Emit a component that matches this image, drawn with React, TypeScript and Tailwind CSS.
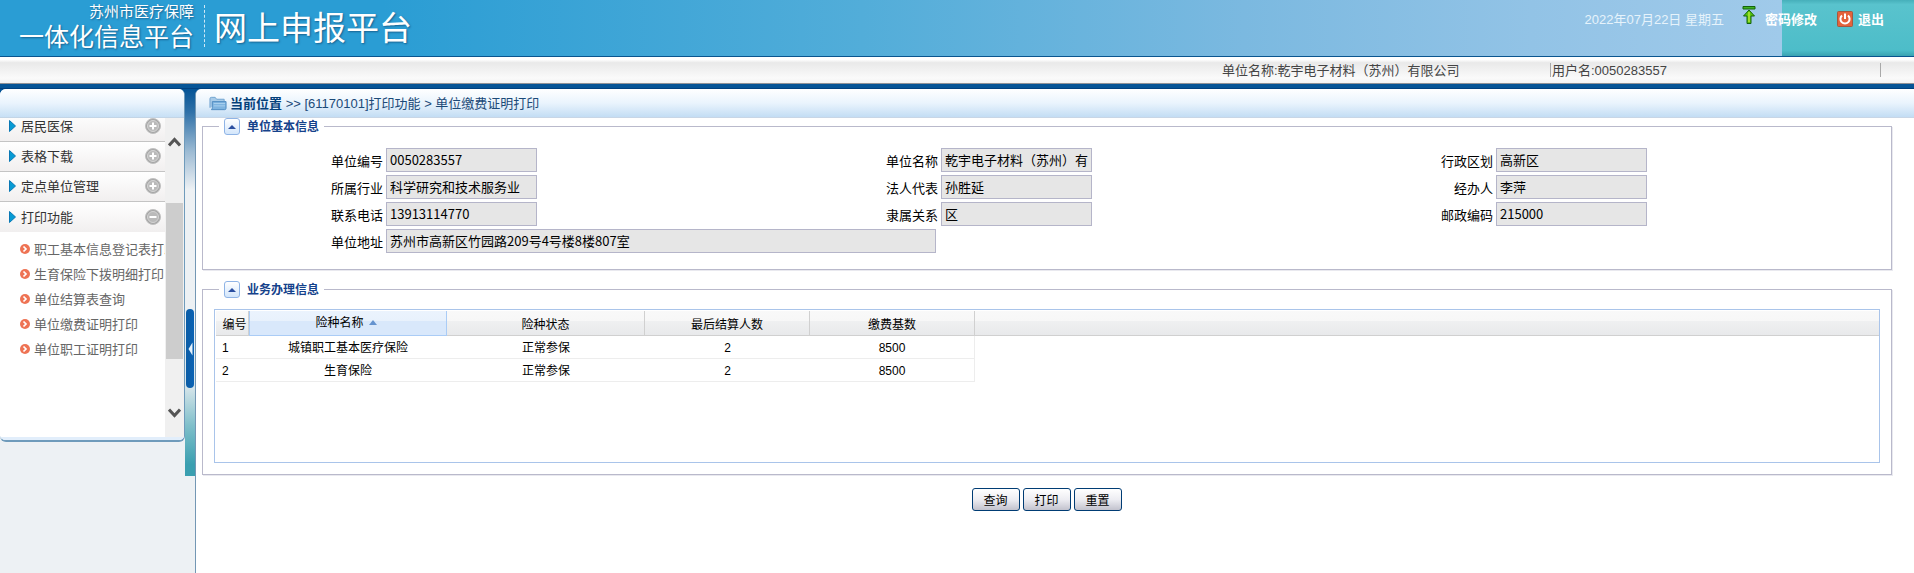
import React, { useId, useState } from "react";

const menu = ["居民医保", "表格下载", "定点单位管理", "打印功能"];
const subMenu = [
  "职工基本信息登记表打印",
  "生育保险下拨明细打印",
  "单位结算表查询",
  "单位缴费证明打印",
  "单位职工证明打印",
];

const fields = [
  ["单位编号", "0050283557"],
  ["单位名称", "乾宇电子材料（苏州）有限公司"],
  ["行政区划", "高新区"],
  ["所属行业", "科学研究和技术服务业"],
  ["法人代表", "孙胜延"],
  ["经办人", "李萍"],
  ["联系电话", "13913114770"],
  ["隶属关系", "区"],
  ["邮政编码", "215000"],
];

const rows = [
  ["1", "城镇职工基本医疗保险", "正常参保", "2", "8500"],
  ["2", "生育保险", "正常参保", "2", "8500"],
];

function UpIcon() {
  return (
    <svg width="14" height="20" viewBox="0 0 14 20" aria-hidden="true">
      <path d="M1 1.500h12v2.500H1z" fill="#3fb523" stroke="#14620d" />
      <path d="M7 5l5.500 6H9V18.500H5V11H1.500z" fill="#58c40c" stroke="#14620d" />
      <path d="M7 7v10" stroke="#b4e636" strokeWidth="1.500" />
    </svg>
  );
}

function PowerIcon() {
  return (
    <svg width="16" height="16" viewBox="0 0 16 16" aria-hidden="true">
      <rect x="0.5" y="0.5" width="15" height="15" rx="1" fill="#e4633c" stroke="#a5583f" />
      <path d="M5 4.500a4.600 4.600 0 1 0 6 0" fill="none" stroke="#fff" strokeWidth="2" />
      <path d="M8 2.500v5.500" stroke="#fff" strokeWidth="2" />
    </svg>
  );
}

function FolderIcon() {
  return (
    <svg width="18" height="15" viewBox="0 0 19 15" aria-hidden="true">
      <path d="M1 12V2.500Q1 1 2.500 1H6.500L8 3H16V5" fill="#a8cbe8" stroke="#6fa3cf" />
      <path d="M3.500 5.500H18V12.500Q18 14 16.500 14H2.500Q3.500 13.500 3.500 12Z" fill="#7fb4e0" stroke="#4f8cc2" />
      <path d="M5 7.500H17M5 10H17" stroke="#a9d0ee" />
    </svg>
  );
}

function ToggleIcon({ open }: { open: boolean }) {
  return (
    <svg width="16" height="16" viewBox="0 0 16 16" aria-hidden="true">
      <circle cx="8" cy="8" r="7.500" fill="#a6a6a6" stroke="#c0c0c0" />
      <circle cx="8" cy="8" r="5.500" fill="#bababa" stroke="#d4d4d4" />
      <path d={open ? "M4.500 8h7" : "M4.500 8h7M8 4.500v7"} stroke="#fff" strokeWidth="2" />
    </svg>
  );
}

function Bullet() {
  return (
    <svg className="shrink-0" width="10" height="10" viewBox="0 0 10 10" aria-hidden="true">
      <circle cx="5" cy="5" r="5" fill="#ee7354" />
      <path d="M3.500 2.500L6 5L3.500 7.500" fill="none" stroke="#fff" strokeWidth="1.700" />
    </svg>
  );
}

function Panel({ title, children }: { title: string; children: React.ReactNode }) {
  const [open, setOpen] = useState(true);
  return (
    <fieldset className="min-w-0 border border-[#b9b9cb] px-[11px] shadow-[1px_1px_0_#e9e9ef]">
      <legend className="ml-[5px] flex h-[17px] items-center gap-[7px] px-[5px] text-xs font-bold text-[#15428b]">
        <button
          type="button"
          aria-label={title}
          onClick={() => setOpen(!open)}
          className="flex h-[17px] w-4 items-center justify-center rounded-[3px] border border-[#8fb4e6] bg-linear-to-b from-white to-[#d3e6fb]"
        >
          <svg width="8" height="4" viewBox="0 0 8 4" aria-hidden="true">
            <path d="M4 0L8 4H0z" fill="#2b4fa0" />
          </svg>
        </button>
        {title}
      </legend>
      {open && children}
    </fieldset>
  );
}

function Field({ label, value, wide = false }: { label: string; value: string; wide?: boolean }) {
  const id = useId();
  return (
    <div className={wide ? "col-span-3 flex items-center gap-[3px]" : "flex items-center gap-[3px]"}>
      <label htmlFor={id} className="w-[168px] shrink-0 pt-[2px] text-right">
        {label}
      </label>
      <input
        id={id}
        readOnly
        defaultValue={value}
        className={
          wide
            ? "h-6 w-[550px] border border-[#b5b5c9] bg-[#e6e6e6] px-[3px] pb-px"
            : "h-6 w-[151px] border border-[#b5b5c9] bg-[#e6e6e6] px-[3px] pb-px"
        }
      />
    </div>
  );
}

export default function App() {
  return (
    <div className="flex min-h-screen flex-col bg-[#edf1f4] font-['Liberation_Sans','Noto_Sans_CJK_SC',sans-serif] text-[13px] text-black">
      <header className="flex h-[57px] items-start justify-between border-b border-[#0a558f] bg-[linear-gradient(to_right,#2a9dd4_0%,#2a9dd4_20%,#52add9_45%,#7bb9e0_65%,#92c3e6_80%,#a0caea_93.1%,transparent_93.1%),linear-gradient(to_bottom,#46afba_0%,#59c3cd_8%,#4dbdc9_90%,#3aa3b2_100%)]">
        <h1 className="flex items-start font-['Noto_Sans_CJK_SC',sans-serif] font-normal text-white [text-shadow:1px_1px_2px_#17618f]">
          <span className="flex w-[194px] flex-col items-end pt-px">
            <span className="text-[15px] leading-5">苏州市医疗保障</span>
            <span className="text-[25px] leading-7">一体化信息平台</span>
          </span>
          <span className="ml-[10px] mt-[5px] h-[42px] border-l border-dashed border-[#cfe8f6]" />
          <span className="ml-[9px] text-[33px] leading-[52px]">网上申报平台</span>
        </h1>
        <nav className="flex items-start pr-[30px] text-white">
          <span className="mr-[18px] pt-[10px] leading-5 text-[#e6f3fb]">2022年07月22日 星期五</span>
          <a href="#password" className="mr-5 flex items-start gap-[9px] font-bold">
            <span className="pt-[5px]">
              <UpIcon />
            </span>
            <span className="pt-[10px] leading-5">密码修改</span>
          </a>
          <a href="#logout" className="flex items-start gap-[5px] font-bold">
            <span className="pt-[11px]">
              <PowerIcon />
            </span>
            <span className="pt-[10px] leading-5">退出</span>
          </a>
        </nav>
      </header>

      <div className="flex h-[27px] items-center justify-end border-b border-[#8f9196] bg-[linear-gradient(to_bottom,#ffffff_0%,#ffffff_10%,#e9e9e9_22%,#fafafa_80%,#f4f4f4_100%)] pr-[33px] text-[#444444]">
        <span className="w-[328px] pt-px">单位名称:乾宇电子材料（苏州）有限公司</span>
        <span className="h-[14px] w-[331px] border-x border-[#a9a9a9] pl-px leading-4">用户名:0050283557</span>
      </div>
      <div className="h-[5px] border-b border-[#00407f] bg-[#055496]" />

      <div className="flex flex-1 items-stretch">
        <aside className="w-[185px] shrink-0 bg-[linear-gradient(#055496,#055496)] bg-[length:100%_8px] bg-no-repeat">
          <div className="overflow-hidden rounded-md border-r border-b-2 border-[#6f9bbb] bg-white font-['Noto_Sans_CJK_SC',sans-serif]">
            <div className="h-[29px] border-b border-[#c3d5e6] bg-linear-to-b from-white via-[#eaf4fd] to-[#c7e0f5]" />
            <div className="flex h-[319px]">
              <nav className="min-w-0 flex-1 overflow-hidden">
                <ul className="-mt-[6px]">
                  {menu.map((item, i) => (
                    <li key={item}>
                      <button
                        type="button"
                        className={
                          i === menu.length - 1
                            ? "flex h-[30px] w-full items-center bg-linear-to-b from-white to-[#f1efef] pl-[9px] pr-1 pb-px text-left text-[#333]"
                            : "flex h-[30px] w-full items-center border-b border-[#c4c4c4] bg-linear-to-b from-white to-[#f1efef] pl-[9px] pr-1 pb-px text-left text-[#333]"
                        }
                      >
                        <svg width="7" height="12" viewBox="0 0 7 12" aria-hidden="true">
                          <path d="M0.500 0.500L6.500 6L0.500 11.500z" fill="#079bd4" stroke="#0a78b4" />
                        </svg>
                        <span className="ml-[5px] flex-1">{item}</span>
                        <ToggleIcon open={i === menu.length - 1} />
                      </button>
                    </li>
                  ))}
                </ul>
                <ul className="pt-1 text-[#666]">
                  {subMenu.map((item) => (
                    <li key={item}>
                      <a href="#print" className="flex h-[25px] items-center gap-1 pl-5 whitespace-nowrap">
                        <Bullet />
                        {item}
                      </a>
                    </li>
                  ))}
                </ul>
              </nav>
              <div className="flex w-[19px] shrink-0 flex-col items-center bg-[#f0f0f0] pt-[19px] pb-[19px]">
                <svg width="13" height="10" viewBox="0 0 13 10" aria-hidden="true">
                  <path d="M1 8.500L6.500 2.500L12 8.500" fill="none" stroke="#555" strokeWidth="3" />
                </svg>
                <div className="mt-[56px] h-[156px] w-[17px] bg-[#cdcdcd]" />
                <svg className="mt-auto" width="13" height="10" viewBox="0 0 13 10" aria-hidden="true">
                  <path d="M1 1.500L6.500 7.500L12 1.500" fill="none" stroke="#555" strokeWidth="3" />
                </svg>
              </div>
            </div>
            <div className="h-[3px] bg-[#e2eefb]" />
          </div>
        </aside>

        <div className="flex w-[10px] shrink-0 flex-col items-center">
          <div className="flex h-[387px] w-full flex-col items-center bg-[linear-gradient(to_bottom,#055496_0%,#2f71a8_6%,#9bbad3_16%,#edf1f4_26%,#edf1f4_60%,#d6e5ea_77%,#7fbfca_87%,#3a9fb0_97%,#3a9fb0_100%)] pt-[220px]">
            <button
              type="button"
              aria-label="收起菜单"
              className="flex h-[79px] w-2 items-center justify-center rounded-sm bg-linear-to-r from-[#0b5da6] to-[#0a62b4]"
            >
              <svg width="5" height="14" viewBox="0 0 5 14" aria-hidden="true">
                <path d="M4.500 0.500V13.500L0.500 7z" fill="#e6f2fb" />
              </svg>
            </button>
          </div>
        </div>

        <div className="min-w-0 flex-1 bg-[linear-gradient(#055496,#055496)] bg-[length:6px_6px] bg-no-repeat">
          <main className="h-full rounded-tl-md border-l border-[#7397b4] bg-white">
            <div className="flex h-[29px] items-center gap-[3px] rounded-tl-md border-b border-[#c8d6e6] bg-linear-to-b from-white via-[#eaf4fd] to-[#c3ddf4] pl-[13px] text-[#1c4a78]">
              <FolderIcon />
              <p className="pt-[2px]">
                <b className="text-[#04407a]">当前位置</b> &gt;&gt; [61170101]打印功能 &gt; 单位缴费证明打印
              </p>
            </div>

            <div className="flex flex-col gap-[11px] pl-[6px] pr-[22px]">
              <Panel title="单位基本信息">
                <form className="grid grid-cols-3 gap-y-[3px] pt-[13px] pb-4 pl-px font-['Noto_Sans_CJK_SC',sans-serif]">
                  {fields.map(([label, value]) => (
                    <Field key={label} label={label} value={value} />
                  ))}
                  <Field label="单位地址" value="苏州市高新区竹园路209号4号楼8楼807室" wide />
                </form>
              </Panel>

              <Panel title="业务办理信息">
                <div className="mt-[11px] mb-[11px] h-[154px] border border-[#a9c4ea] pt-px pl-px text-xs">
                  <table className="w-full table-fixed border-separate border-spacing-0 text-center">
                    <colgroup>
                      <col className="w-[33px]" />
                      <col className="w-[198px]" />
                      <col className="w-[198px]" />
                      <col className="w-[165px]" />
                      <col className="w-[165px]" />
                      <col />
                    </colgroup>
                    <thead>
                      <tr className="h-[25px] [&>th]:border-b [&>th]:border-[#d0d0d0] [&>th]:bg-[linear-gradient(to_bottom,#f9f9f9_0%,#f7f7f7_42%,#eff0f1_43%,#e8e9eb_100%)] [&>th]:p-0 [&>th]:pt-[3px] [&>th]:font-normal">
                        <th className="border-r border-r-[#d4d4d4] pl-[5px]! whitespace-nowrap">编号</th>
                        <th
                          aria-sort="ascending"
                          className="border-x border-x-[#aaccf6]! border-b-[#aaccf6]! bg-[linear-gradient(to_bottom,#ebf3fd_0%,#e8f1fc_42%,#d9e8fb_43%,#d9e8fb_100%)]!"
                        >
                          <span className="flex items-center justify-center gap-[5px] pr-1 pb-1">
                            险种名称
                            <svg width="8" height="5" viewBox="0 0 8 5" aria-hidden="true">
                              <path d="M4 0L8 5H0z" fill="#6593cf" />
                            </svg>
                          </span>
                        </th>
                        <th className="border-r border-r-[#d4d4d4]">险种状态</th>
                        <th className="border-r border-r-[#d4d4d4]">最后结算人数</th>
                        <th className="border-r border-r-[#d4d4d4]">缴费基数</th>
                        <th />
                      </tr>
                    </thead>
                    <tbody>
                      {rows.map((row) => (
                        <tr key={row[0]} className="h-[23px]">
                          {row.map((cell, i) => (
                            <td
                              key={i}
                              className={
                                i === 0
                                  ? "border-b border-[#ededed] p-0 pt-[2px] pl-[6px] text-left"
                                  : i === 4
                                    ? "border-r border-b border-[#ededed] p-0 pt-[2px]"
                                    : "border-b border-[#ededed] p-0 pt-[2px]"
                              }
                            >
                              {cell}
                            </td>
                          ))}
                          <td />
                        </tr>
                      ))}
                    </tbody>
                  </table>
                </div>
              </Panel>
            </div>

            <div className="flex justify-center gap-[3px] pt-[13px] pr-[17px] text-xs">
              {["查询", "打印", "重置"].map((name) => (
                <button
                  key={name}
                  type="button"
                  className="h-[23px] w-12 rounded-[3px] border border-[#003c74] bg-linear-to-b from-white via-[#ededf2] to-[#c2c2cd] font-['Noto_Sans_CJK_SC',sans-serif] leading-5"
                >
                  {name}
                </button>
              ))}
            </div>
          </main>
        </div>
      </div>
    </div>
  );
}
